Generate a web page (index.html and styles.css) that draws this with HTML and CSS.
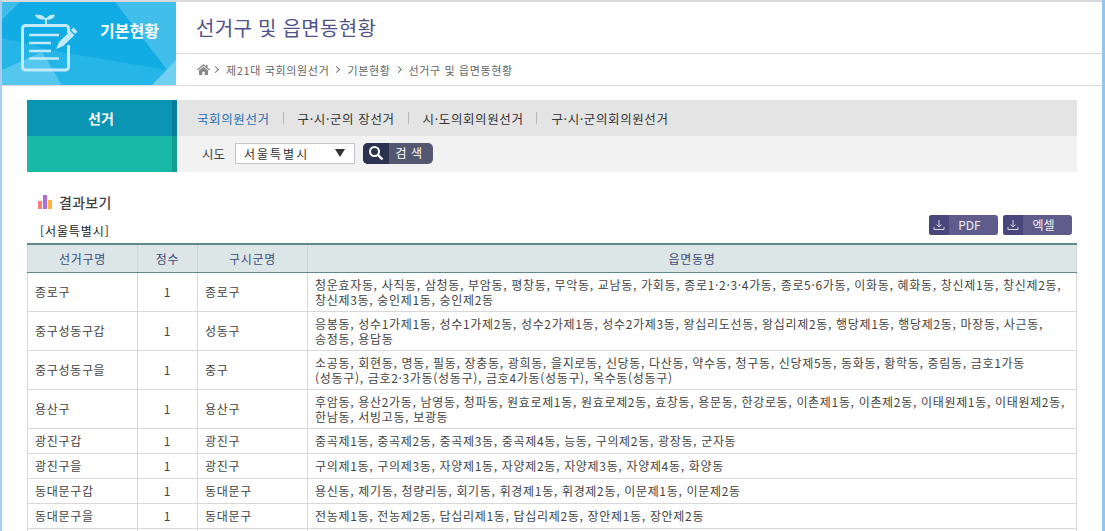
FILE: index.html
```html
<!DOCTYPE html>
<html lang="ko">
<head>
<meta charset="utf-8">
<title>선거구 및 읍면동현황</title>
<link rel="stylesheet" href="styles.css">
</head>
<body>
<div class="frame">
  <header class="top">
    <div class="badge">
      <svg class="badge-bg" width="174" height="83" viewBox="0 0 174 83">
        <rect width="174" height="83" fill="#26b5e7"/>
        <polygon points="0,0 18,0 0,18" fill="#3dbdea"/>
        <polygon points="0,68 40,50 60,83 0,83" fill="#55c6ed"/>
        <polygon points="113,0 174,0 174,83 165,68" fill="#42beeb"/>
        <polygon points="18,0 113,0 165,68 58,50 0,36 0,18" fill="#12ace4"/>
        <polygon points="150,83 174,58 174,83" fill="#6fd0f0"/>
      </svg>
      <svg class="badge-icon" width="60" height="60" viewBox="0 0 60 60" fill="none">
        <path d="M25 10V4" stroke="#c2eaf9" stroke-width="2"/>
        <path d="M25 5c-2-4-7-5-11-4 1 3 7 6 11 4zM25 5c2-4 6-5 9-4-1 3-5 6-9 4z" fill="#c2eaf9"/>
        <path d="M47.5 19V14.5a3 3 0 0 0-3-3H4.500a3 3 0 0 0-3 3V53a3 3 0 0 0 3 3H44.500a3 3 0 0 0 3-3V31" stroke="#c2eaf9" stroke-width="3"/>
        <path d="M8 21h30M8 29h22M8 37h22M8 44.500h30" stroke="#c2eaf9" stroke-width="2.400"/>
        <path d="M35 35l3.300-7.300 11-10.700 4 4.200-11 10.800z" fill="#c2eaf9"/>
        <path d="M50 16l2.400-2.400 4 4-2.400 2.400z" fill="#c2eaf9"/>
      </svg>
      <span class="badge-title">기본현황</span>
    </div>
    <div class="heading">
      <h1>선거구 및 읍면동현황</h1>
      <nav class="crumbs">
        <svg class="home" width="13" height="11" viewBox="0 0 13 11"><path d="M6.500 0L0 5.600l.8.900L6.500 1.700l5.700 4.800.8-.9-2.400-2V1H9v1.200zM2 6.600V11h3.300V7.800h2.400V11H11V6.600L6.500 2.800z" fill="#888"/></svg>
        <span class="sep"></span><span>제21대 국회의원선거</span>
        <span class="sep"></span><span>기본현황</span>
        <span class="sep"></span><span>선거구 및 읍면동현황</span>
      </nav>
    </div>
  </header>

  <section class="search">
    <div class="side">
      <div class="side-top">선거</div>
      <div class="side-bottom"></div>
    </div>
    <div class="panel">
      <div class="tabs">
        <a class="tab active">국회의원선거</a><i></i>
        <a class="tab">구·시·군의 장선거</a><i></i>
        <a class="tab">시·도의회의원선거</a><i></i>
        <a class="tab">구·시·군의회의원선거</a>
      </div>
      <div class="filter">
        <label class="filter-label">시도</label>
        <div class="select"><span>서울특별시</span><b class="arrow"></b></div>
        <button class="search-btn">
          <span class="search-ico"><svg width="16" height="16" viewBox="0 0 16 16" fill="none"><circle cx="6.500" cy="6.500" r="4.500" stroke="#fff" stroke-width="2"/><path d="M10 10l4.500 4.500" stroke="#fff" stroke-width="2.400"/></svg></span>
          <span class="search-text">검 색</span>
        </button>
      </div>
    </div>
  </section>

  <section class="results">
    <h2><svg width="14" height="14" viewBox="0 0 14 14"><rect y="6" width="4" height="8" fill="#ff7a7a"/><rect x="5" width="4" height="14" fill="#b06fd8"/><rect x="10" y="5" width="4" height="9" fill="#ffb63c"/></svg>결과보기</h2>
    <div class="results-bar">
      <span class="region">[서울특별시]</span>
      <div class="downloads">
        <a class="dl"><span class="dl-ico"><svg width="12" height="12" viewBox="0 0 12 12" fill="none" stroke="#d8d8e8"><path d="M6 1v7M3.500 5.500L6 8l2.500-2.500M1 8v2.500h10V8"/></svg></span><span class="dl-text">PDF</span></a>
        <a class="dl"><span class="dl-ico"><svg width="12" height="12" viewBox="0 0 12 12" fill="none" stroke="#d8d8e8"><path d="M6 1v7M3.500 5.500L6 8l2.500-2.500M1 8v2.500h10V8"/></svg></span><span class="dl-text">엑셀</span></a>
      </div>
    </div>
    <table>
      <colgroup><col class="c1"><col class="c2"><col class="c3"><col></colgroup>
      <thead><tr><th>선거구명</th><th>정수</th><th>구시군명</th><th>읍면동명</th></tr></thead>
      <tbody>
        <tr class="r2"><td>종로구</td><td class="num">1</td><td>종로구</td><td>청운효자동, 사직동, 삼청동, 부암동, 평창동, 무악동, 교남동, 가회동, 종로1·2·3·4가동, 종로5·6가동, 이화동, 혜화동, 창신제1동, 창신제2동, 창신제3동, 숭인제1동, 숭인제2동</td></tr>
        <tr class="r2"><td>중구성동구갑</td><td class="num">1</td><td>성동구</td><td>응봉동, 성수1가제1동, 성수1가제2동, 성수2가제1동, 성수2가제3동, 왕십리도선동, 왕십리제2동, 행당제1동, 행당제2동, 마장동, 사근동, 송정동, 용답동</td></tr>
        <tr class="r2"><td>중구성동구을</td><td class="num">1</td><td>중구</td><td>소공동, 회현동, 명동, 필동, 장충동, 광희동, 을지로동, 신당동, 다산동, 약수동, 청구동, 신당제5동, 동화동, 황학동, 중림동, 금호1가동<wbr>(성동구), 금호2·3가동(성동구), 금호4가동(성동구), 옥수동(성동구)</td></tr>
        <tr class="r2"><td>용산구</td><td class="num">1</td><td>용산구</td><td>후암동, 용산2가동, 남영동, 청파동, 원효로제1동, 원효로제2동, 효창동, 용문동, 한강로동, 이촌제1동, 이촌제2동, 이태원제1동, 이태원제2동, 한남동, 서빙고동, 보광동</td></tr>
        <tr class="r1"><td>광진구갑</td><td class="num">1</td><td>광진구</td><td>중곡제1동, 중곡제2동, 중곡제3동, 중곡제4동, 능동, 구의제2동, 광장동, 군자동</td></tr>
        <tr class="r1"><td>광진구을</td><td class="num">1</td><td>광진구</td><td>구의제1동, 구의제3동, 자양제1동, 자양제2동, 자양제3동, 자양제4동, 화양동</td></tr>
        <tr class="r1"><td>동대문구갑</td><td class="num">1</td><td>동대문구</td><td>용신동, 제기동, 청량리동, 회기동, 휘경제1동, 휘경제2동, 이문제1동, 이문제2동</td></tr>
        <tr class="r1"><td>동대문구을</td><td class="num">1</td><td>동대문구</td><td>전농제1동, 전농제2동, 답십리제1동, 답십리제2동, 장안제1동, 장안제2동</td></tr>
        <tr class="r1"><td></td><td></td><td></td><td></td></tr>
      </tbody>
    </table>
  </section>
</div>
</body>
</html>
```
FILE: styles.css
```css
* { box-sizing: border-box; }
html, body { margin: 0; height: 100%; overflow: hidden; background: #fff; }
body {
  height: 531px;
  padding: 2px 3px 0 2px;
  background: linear-gradient(90deg, #a9cdee 0, #a9cdee 2px, #fff 2px, #fff 1102px, #92c4ec 1102px);
  font-family: "Noto Sans CJK KR", "Noto Sans", sans-serif;
  font-size: 12px;
  color: #444;
}
.frame { background: #fff; height: 100%; overflow: hidden; box-shadow: 0 -2px 0 #d9d9de; }
.top { display: flex; height: 84px; border-bottom: 1px solid #d9d9de; }
.badge { position: relative; width: 174px; height: 83px; overflow: hidden; flex: none; }
.badge-bg { position: absolute; left: 0; top: 0; }
.badge-icon { position: absolute; left: 19px; top: 12px; }
.badge-title { position: absolute; left: 98px; top: 16px; color: #fff; font-size: 16px; font-weight: 700; line-height: 24px; }
.heading { flex: 1; }
h1 { margin: 0; height: 52px; border-bottom: 1px solid #d9d9de; padding-left: 20px; font-size: 20px; font-weight: 400; line-height: 52px; letter-spacing: .3px; color: #50528a; }
.crumbs { display: flex; align-items: center; height: 31px; padding-left: 21px; font-size: 11px; letter-spacing: .65px; color: #666; }
.sep { width: 5px; height: 5px; margin: 0 8px 0 5px; border-top: 1px solid #777; border-right: 1px solid #777; transform: rotate(45deg); }
.home + .sep { margin-left: 3px; }
.search { display: flex; margin: 14px 25px 0; height: 72px; }
.side { width: 150px; flex: none; color: #fff; }
.side-top { height: 36px; padding-left: 3px; background: #0a95b2; border-right: 5px solid #0a7f99; font-size: 14px; font-weight: 700; line-height: 36px; text-align: center; }
.side-bottom { height: 36px; background: #19b9a7; border-right: 5px solid #159d90; }
.panel { flex: 1; }
.tabs { display: flex; align-items: center; height: 36px; padding-left: 20px; background: #e4e4e4; font-size: 12.5px; letter-spacing: .6px; color: #333; }
.tab.active { color: #1e6fb3; }
.tabs i { width: 1px; height: 12px; margin: 0 14px 0 13px; background: #b8b8b8; }
.filter { display: flex; align-items: center; height: 36px; padding: 0 0 2px 25px; background: #f2f2f2; }
.filter-label { width: 33px; font-size: 12.5px; }
.select { display: flex; align-items: center; justify-content: space-between; width: 120px; height: 21px; padding: 0 9px 0 8px; border: 1px solid #c4c4c4; background: #fff; font-size: 12px; letter-spacing: 2px; color: #333; }
.arrow { width: 0; height: 0; border: 5px solid transparent; border-top: 8px solid #333; border-bottom: 0; }
.search-btn { display: flex; width: 70px; height: 21px; margin-left: 8px; padding: 0; border: 0; border-radius: 5px; overflow: hidden; background: #53576f; color: #fff; font: inherit; }
.search-ico { display: flex; align-items: center; justify-content: center; width: 26px; height: 21px; background: #2c3350; }
.search-text { flex: 1; padding-right: 4px; line-height: 20px; letter-spacing: .5px; }
.results { margin: 0 25px; }
h2 { display: flex; align-items: center; gap: 7px; height: 22px; margin: 19px 0 0 11px; font-size: 14px; font-weight: 500; letter-spacing: .3px; color: #444; line-height: 22px; }
.results-bar { display: flex; justify-content: space-between; height: 30px; }
.region { padding: 9px 0 0 13px; color: #222; line-height: 18px; letter-spacing: .9px; }
.downloads { display: flex; gap: 5px; padding: 2px 5px 0 0; }
.dl { display: flex; width: 69px; height: 20px; border-radius: 3px; overflow: hidden; background: #5f5c8c; color: #f2f2f2; }
.dl-ico { display: flex; align-items: center; justify-content: center; width: 20px; background: #48467a; }
.dl-text { flex: 1; padding-right: 8px; text-align: center; line-height: 19px; }
table { width: 1050px; border-collapse: collapse; table-layout: fixed; border-top: 2px solid #5f8a8d; font-size: 12px; letter-spacing: .68px; word-break: keep-all; }
.c1 { width: 110px; } .c2 { width: 60px; } .c3 { width: 110px; }
th { height: 28px; padding: 0; background: #dde6e6; border: 1px solid #cfd6d6; border-top: 0; border-bottom: 1px solid #5f8a8d; font-weight: 400; color: #3c4a7a; }
td { padding: 0 7px; border: 1px solid #d8d8d8; line-height: 15px; color: #444; }
.num { text-align: center; }
.r2 td { height: 39px; }
.r1 td { height: 25px; }
```
